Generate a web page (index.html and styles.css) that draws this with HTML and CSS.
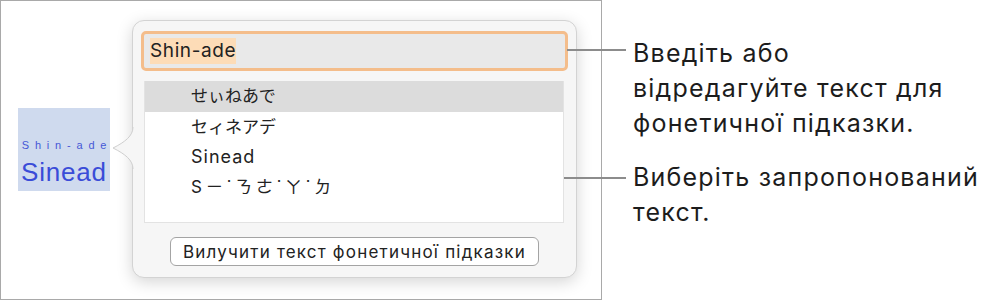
FILE: index.html
```html
<!DOCTYPE html>
<html lang="uk">
<head>
<meta charset="utf-8">
<link rel="stylesheet" href="styles.css">
</head>
<body>
<div class="stage">
  <div class="frame">
    <div class="selection">
      <div class="ruby">Shin-ade</div>
      <div class="base">Sinead</div>
    </div>
    <div class="popover">
      <svg class="arrow" width="22" height="42" viewBox="0 0 22 42">
        <path d="M22,0 L21,0 C21,9 13,15 1,21 C13,27 21,33 21,42 L22,42 Z" fill="#f6f6f6"/>
        <path d="M21,0 C21,9 13,15 1,21 C13,27 21,33 21,42" fill="none" stroke="#cfcfcf" stroke-width="1"/>
      </svg>
      <div class="field"><span class="hl">Shin-ade</span></div>
      <ul class="list">
        <li class="sel cjk">せぃねあで</li>
        <li class="cjk">セィネアデ</li>
        <li class="latin">Sinead</li>
        <li class="bpmf">Sㄧ˙ㄋㄜ˙ㄚ˙ㄉ</li>
      </ul>
      <div class="actions"><button class="btn">Вилучити текст фонетичної підказки</button></div>
    </div>
  </div>
  <div class="notes">
    <p class="note note1"><span class="leader"></span>Введіть або<br>відредагуйте текст для<br>фонетичної підказки.</p>
    <p class="note note2"><span class="leader"></span>Виберіть запропонований<br>текст.</p>
  </div>
</div>
</body>
</html>
```

FILE: styles.css
```css
* { box-sizing: border-box; }
html, body { margin: 0; padding: 0; background: #fff; }
body {
  font-family: Inter, "Noto Sans", "Noto Sans CJK JP", sans-serif;
  color: #1d1d1d;
}
.stage {
  display: flex;
  align-items: flex-start;
  width: 995px;
  height: 301px;
}
.frame {
  width: 602px;
  height: 300px;
  border: 1px solid #a9a9a9;
  display: flex;
  align-items: flex-start;
  padding: 19px 0 0 17px;
}
.selection {
  width: 92px;
  height: 83px;
  margin-top: 88px;
  background: #cfdaee;
  display: flex;
  flex-direction: column;
  align-items: center;
  color: #3a4cd8;
  font-family: "Liberation Sans", Arial, sans-serif;
}
.ruby {
  font-size: 11px;
  letter-spacing: 5.8px;
  margin-top: 31px;
  margin-right: -6px;
  line-height: 13px;
  color: #4658d6;
}
.base {
  font-size: 26px;
  line-height: 28px;
  letter-spacing: 0.8px;
  margin-top: 6px;
}
.popover {
  position: relative;
  width: 445px;
  height: 258px;
  margin-left: 22px;
  background: #f6f6f6;
  border: 1px solid #d3d3d3;
  border-radius: 12px;
  box-shadow: 0 4px 16px rgba(0,0,0,0.17);
  padding: 10px 8px 0 8px;
}
.arrow {
  position: absolute;
  left: -21px;
  top: 106px;
}
.field {
  height: 40px;
  border: 3px solid #f4bd8b;
  border-radius: 5px;
  background: #e9e9e9;
  padding: 3px 0 0 6px;
  font-size: 19px;
  letter-spacing: 0.6px;
  line-height: 28px;
  color: #222;
}
.hl { background: #fddcb7; display: inline-block; line-height: 26px; }
.list {
  list-style: none;
  margin: 10px 4px 0 3px;
  padding: 0;
  height: 142px;
  background: #fff;
  border: 1px solid #e3e3e3;
  border-top: 0;
  font-family: Inter, "Noto Sans CJK JP", sans-serif;
  font-size: 18px;
  color: #222;
}
.list li {
  height: 30px;
  line-height: 30px;
  padding-left: 46px;
}
.list li.cjk { font-size: 17px; }
.list li.latin { letter-spacing: 1px; }
.list li.bpmf { font-family: Inter, "Noto Sans CJK TC", sans-serif; font-size: 17px; letter-spacing: 4px; }
.list li.sel { background: #dcdcdc; height: 31px; line-height: 31px; }
.actions {
  display: flex;
  justify-content: center;
  margin-top: 14px;
}
.btn {
  width: 369px;
  height: 29px;
  border: 1px solid #a4a4a4;
  border-radius: 6px;
  background: #fff;
  font-family: Inter, "Noto Sans", sans-serif;
  font-size: 17px;
  letter-spacing: 1.2px;
  color: #222;
  padding: 0;
}
.notes {
  width: 362px;
  margin-left: 31px;
  padding-top: 36px;
}
.note {
  position: relative;
  margin: 0;
  font-size: 25px;
  letter-spacing: 1.2px;
  line-height: 35px;
  white-space: nowrap;
  color: #1c1c1c;
}
.note2 { margin-top: 19px; }
.leader {
  position: absolute;
  left: -66px;
  width: 59px;
  height: 2px;
  background: #8c8c8c;
}
.note1 .leader { top: 13px; }
.note2 .leader { top: 17px; left: -69px; width: 62px; }
```
